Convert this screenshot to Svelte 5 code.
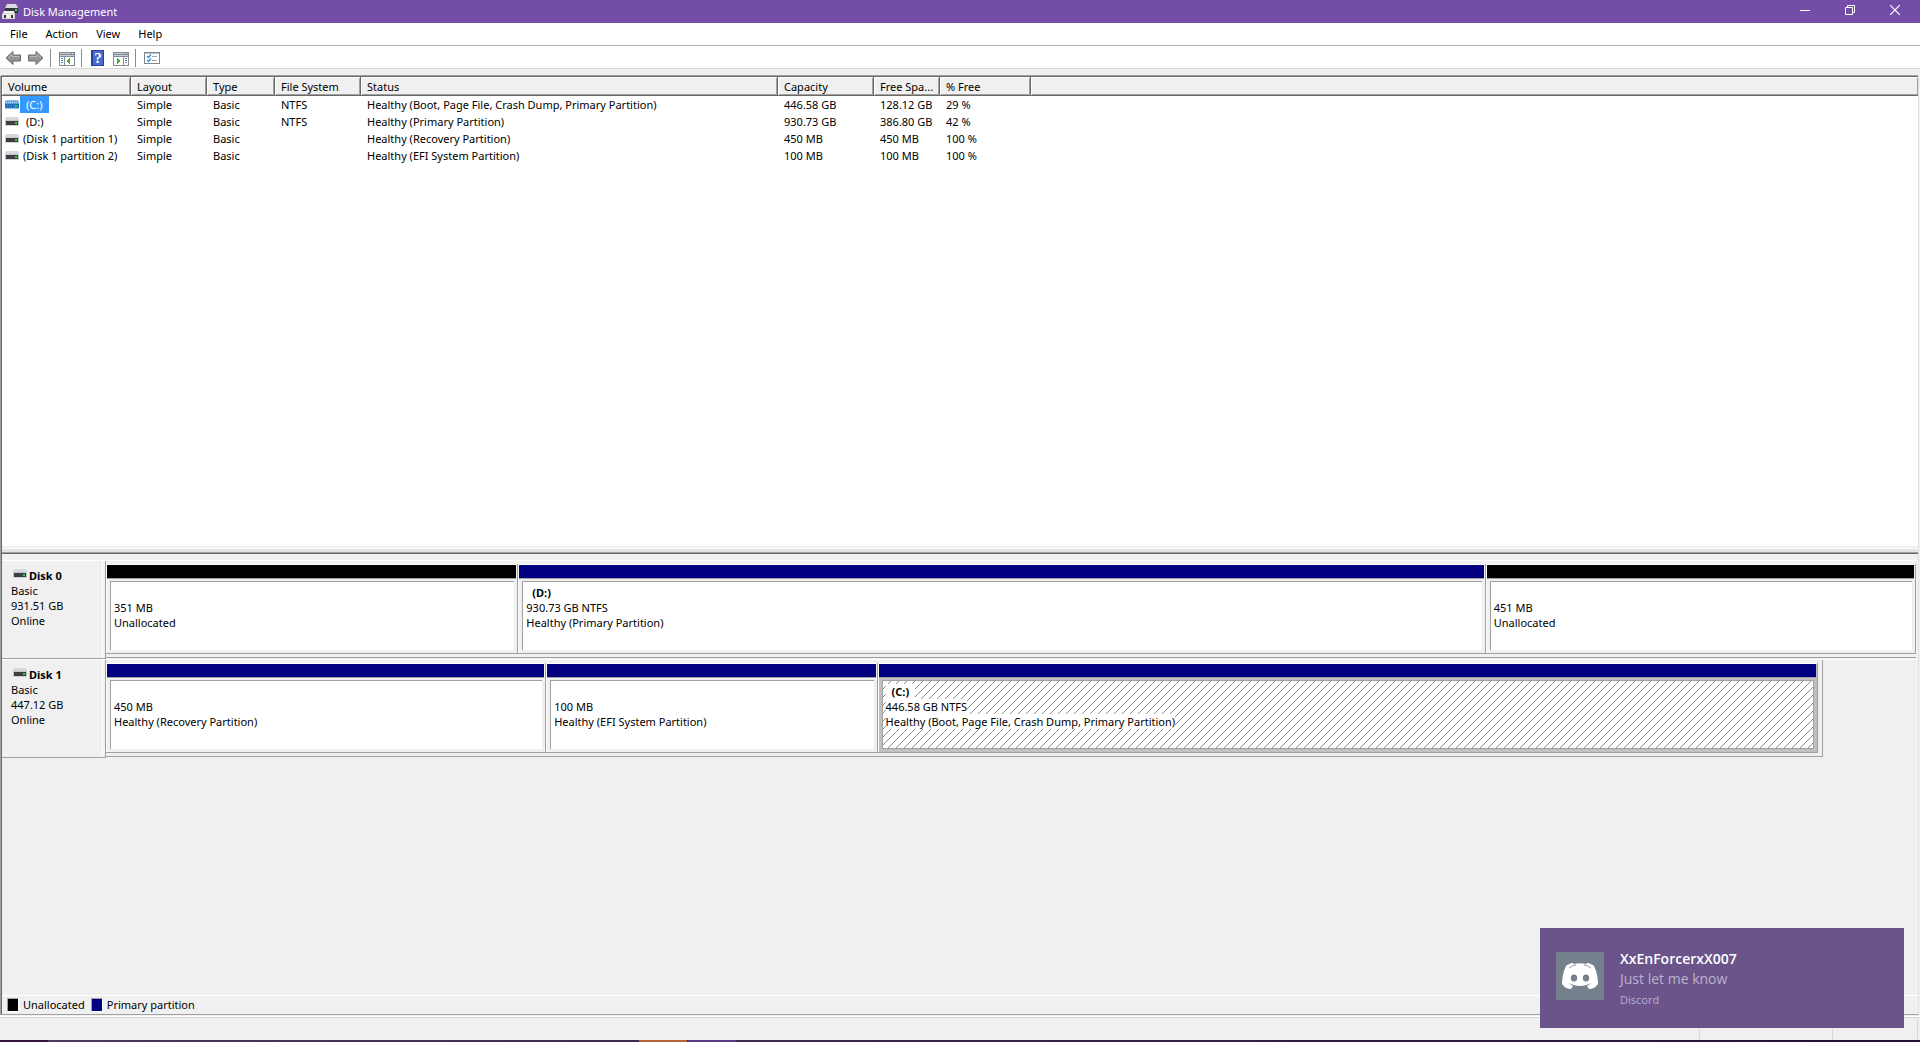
<script lang="ts">
  type Volume = {
    name: string;
    layout: string;
    type: string;
    fs: string;
    status: string;
    capacity: string;
    free: string;
    percent: string;
    letter?: boolean;
  };

  type Partition = {
    label: string;
    size: string;
    status: string;
    share: number;
    kind: 'unallocated' | 'primary';
    selected?: boolean;
  };

  const menus = ['File', 'Action', 'View', 'Help'];
  const columns = ['Volume', 'Layout', 'Type', 'File System', 'Status', 'Capacity', 'Free Spa...', '% Free'];

  const volumes: Volume[] = [
    { name: '(C:)', layout: 'Simple', type: 'Basic', fs: 'NTFS', status: 'Healthy (Boot, Page File, Crash Dump, Primary Partition)', capacity: '446.58 GB', free: '128.12 GB', percent: '29 %', letter: true },
    { name: '(D:)', layout: 'Simple', type: 'Basic', fs: 'NTFS', status: 'Healthy (Primary Partition)', capacity: '930.73 GB', free: '386.80 GB', percent: '42 %', letter: true },
    { name: '(Disk 1 partition 1)', layout: 'Simple', type: 'Basic', fs: '', status: 'Healthy (Recovery Partition)', capacity: '450 MB', free: '450 MB', percent: '100 %' },
    { name: '(Disk 1 partition 2)', layout: 'Simple', type: 'Basic', fs: '', status: 'Healthy (EFI System Partition)', capacity: '100 MB', free: '100 MB', percent: '100 %' }
  ];

  const disks: { name: string; size: string; width: number; parts: Partition[] }[] = [
    {
      name: 'Disk 0',
      size: '931.51 GB',
      width: 100,
      parts: [
        { label: '', size: '351 MB', status: 'Unallocated', share: 412, kind: 'unallocated' },
        { label: '(D:)', size: '930.73 GB NTFS', status: 'Healthy (Primary Partition)', share: 968, kind: 'primary' },
        { label: '', size: '451 MB', status: 'Unallocated', share: 430, kind: 'unallocated' }
      ]
    },
    {
      name: 'Disk 1',
      size: '447.12 GB',
      width: 94.85,
      parts: [
        { label: '', size: '450 MB', status: 'Healthy (Recovery Partition)', share: 440, kind: 'primary' },
        { label: '', size: '100 MB', status: 'Healthy (EFI System Partition)', share: 331, kind: 'primary' },
        { label: '(C:)', size: '446.58 GB NTFS', status: 'Healthy (Boot, Page File, Crash Dump, Primary Partition)', share: 941, kind: 'primary', selected: true }
      ]
    }
  ];

  let selected = $state(0);
</script>

{#snippet drive(active: boolean)}
  <svg class="drive" width="14" height="9" viewBox="0 0 14 9" shape-rendering="crispEdges" aria-hidden="true">
    <path d="M1 0H13V1H14V4H0V1H1Z" fill={active ? '#8fc0ee' : '#d6d8db'} />
    <rect y="3" width="14" height="1" fill={active ? '#6aaeea' : '#c3c6ca'} />
    <rect y="4" width="14" height="4" fill={active ? '#1c6db5' : '#c3c6ca'} />
    <rect x="1" y="4" width="12" height="4" fill={active ? '#1c6db5' : '#3c3f42'} />
    <rect y="8" width="14" height="1" fill={active ? '#8fc0ee' : '#d0d2d4'} />
    <rect x="10" y="5" width="2" height="2" fill="#35d03a" />
    {#if active}
      <path d="M0 1.500H14M0 3.500H14M0 5.500H9M0 7.500H14" stroke="#3399ff" stroke-dasharray="1 1" />
    {/if}
  </svg>
{/snippet}

<div class="window">
  <header class="titlebar">
    <svg width="17" height="16" viewBox="0 0 17 16" aria-hidden="true">
      <path d="M5 0H14L16 4V9H3V4Z" fill="#d9dcde" />
      <path d="M3 4H16V9H3Z" fill="#33373a" />
      <rect x="13" y="5" width="2" height="2" fill="#3be048" />
      <path d="M2 7H12L13 10V15H0V10Z" fill="#d6d7d3" />
      <path d="M2 7H12V9H2Z" fill="#f4f4f2" />
      <rect x="1" y="10" width="11" height="4" fill="#eeeeeb" />
      <rect x="2" y="11" width="2" height="3" fill="#333" />
      <rect x="9" y="11" width="2" height="3" fill="#333" />
    </svg>
    <h1>Disk Management</h1>
    <div class="caption">
      <button aria-label="Minimize">
        <svg width="10" height="10" viewBox="0 0 10 10"><path d="M0 5.500H10" stroke="#fff" /></svg>
      </button>
      <button aria-label="Restore">
        <svg width="10" height="10" viewBox="0 0 10 10" fill="none" stroke="#fff"><path d="M.5 2.500H7.500V9.500H.5ZM2.500 2.500V.5H9.500V7.500H7.500" /></svg>
      </button>
      <button aria-label="Close">
        <svg width="10" height="10" viewBox="0 0 10 10"><path d="M0 0L10 10M10 0L0 10" stroke="#fff" stroke-width="1.200" /></svg>
      </button>
    </div>
  </header>

  <nav class="menubar">
    {#each menus as menu}
      <button>{menu}</button>
    {/each}
  </nav>

  <div class="toolbar">
    <button aria-label="Back">
      <svg width="16" height="16" viewBox="0 0 16 16"><path d="M1 8L8 1.500V5H15.500V11H8V14.500Z" fill="#939393" stroke="#6c6c6c" /><path d="M3 8L7 4.500V6.500H14" fill="none" stroke="#b9b9b9" /></svg>
    </button>
    <button class="forward" aria-label="Forward">
      <svg width="16" height="16" viewBox="0 0 16 16"><path d="M15 8L8 1.500V5H.5V11H8V14.500Z" fill="#939393" stroke="#6c6c6c" /><path d="M2 6.500H9V4.500L13 8" fill="none" stroke="#b9b9b9" /></svg>
    </button>
    <span class="divider"></span>
    <button class="panes" aria-label="Show/Hide Console Tree">
      <svg width="16" height="14" viewBox="0 0 16 14" shape-rendering="crispEdges">
        <rect width="16" height="14" fill="#858b94" /><rect x="1" y="1" width="11" height="1" fill="#c3c8d0" /><path d="M13 1h1v1h-1z" fill="#fff" />
        <rect x="1" y="3" width="14" height="1" fill="#c9ced6" /><rect x="1" y="5" width="4" height="8" fill="#fff" /><rect x="6" y="5" width="9" height="8" fill="#fff" />
        <path d="M2 6h2v1H2zM2 8h2v1H2zM2 10h2v1H2z" fill="#5d86b8" /><path d="M11 6V12L7 9Z" fill="#3faf2c" />
      </svg>
    </button>
    <span class="divider"></span>
    <button class="help" aria-label="Help">
      <svg width="13" height="16" viewBox="0 0 13 16">
        <rect width="13" height="16" fill="#24419c" /><rect x="2" y="1" width="10" height="14" fill="#4a6cd0" />
        <text x="7" y="13" text-anchor="middle" font-family="Liberation Serif, serif" font-size="15" font-weight="700" fill="#fff">?</text>
      </svg>
    </button>
    <button class="panes actions" aria-label="Show/Hide Action Pane">
      <svg width="16" height="14" viewBox="0 0 16 14" shape-rendering="crispEdges">
        <rect width="16" height="14" fill="#858b94" /><rect x="1" y="1" width="11" height="1" fill="#c3c8d0" /><path d="M13 1h1v1h-1z" fill="#fff" />
        <rect x="1" y="3" width="14" height="1" fill="#c9ced6" /><rect x="1" y="5" width="9" height="8" fill="#fff" /><rect x="11" y="5" width="4" height="8" fill="#fff" />
        <path d="M12 6h2v1h-2zM12 8h2v1h-2zM12 10h2v1h-2z" fill="#5d86b8" /><path d="M4 6V12L8 9Z" fill="#3faf2c" />
      </svg>
    </button>
    <span class="divider"></span>
    <button aria-label="Settings">
      <svg width="16" height="12" viewBox="0 0 16 12">
        <rect x=".5" y=".5" width="15" height="11" fill="#fff" stroke="#80868d" />
        <path d="M0 1H16" stroke="#80868d" />
        <path d="M3 4L4.500 5.500L7 2.500M3 8L4.500 9.500L7 6.500" fill="none" stroke="#3489d0" stroke-width="1.200" />
        <path d="M8 4.500H13M8 8.500H13" stroke="#a0a5aa" />
      </svg>
    </button>
  </div>

  <main>
    <section class="volumes" aria-label="Volumes">
      <table>
        <colgroup>
          <col class="c-volume" /><col class="c-layout" /><col class="c-type" /><col class="c-fs" />
          <col class="c-status" /><col class="c-capacity" /><col class="c-free" /><col class="c-percent" /><col />
        </colgroup>
        <thead>
          <tr>
            {#each columns as column}
              <th>{column}</th>
            {/each}
            <th class="rest" aria-hidden="true"></th>
          </tr>
        </thead>
        <tbody>
          {#each volumes as volume, i}
            <tr onclick={() => (selected = i)}>
              <td class="name">
                {@render drive(selected === i)}<span class:letter={volume.letter} class:active={selected === i}>{volume.name}</span>
              </td>
              <td>{volume.layout}</td>
              <td>{volume.type}</td>
              <td>{volume.fs}</td>
              <td>{volume.status}</td>
              <td>{volume.capacity}</td>
              <td>{volume.free}</td>
              <td>{volume.percent}</td>
              <td></td>
            </tr>
          {/each}
        </tbody>
      </table>
    </section>

    <section class="graph" aria-label="Disks">
      {#each disks as disk}
        <div class="disk">
          <div class="disk-info">
            <div class="disk-name">{@render drive(false)}<b>{disk.name}</b></div>
            <div>Basic</div>
            <div>{disk.size}</div>
            <div>Online</div>
          </div>
          <div class="track">
            <div class="parts" style="width: {disk.width}%">
              {#each disk.parts as part}
                <div class="part" class:selected={part.selected} style="flex-grow: {part.share}">
                  <div class="stripe {part.kind}"></div>
                  <div class="body">
                    <div><b>{part.label}</b></div>
                    <div><span>{part.size}</span></div>
                    <div><span>{part.status}</span></div>
                  </div>
                </div>
              {/each}
            </div>
          </div>
        </div>
      {/each}
      <div class="legend">
        <i class="unallocated"></i><span>Unallocated</span>
        <i class="primary"></i><span>Primary partition</span>
      </div>
    </section>
  </main>

  <footer class="statusbar"><span></span><span></span><span></span></footer>
  <div class="taskbar"><i class="first"></i><i class="orange"></i><i class="violet"></i></div>

  <aside class="toast">
    <div class="avatar">
      <svg width="36" height="27" viewBox="0 0 36 27" aria-hidden="true">
        <path d="M12 1L11 0C8 0 5 2 4 3C1 9 0 15 0 21C2 24 5 26 9 26L11 23C9 22 8 21 7 20C14 24 22 24 29 20C28 21 27 22 25 23L27 26C31 26 34 24 36 21C36 15 35 9 32 3C31 2 28 0 25 0L24 1C20 0 16 0 12 1Z" fill="#fff" />
        <path d="M7 5C10 3 12 2 14 2M29 5C26 3 24 2 22 2" fill="none" stroke="#74808c" stroke-width=".8" />
        <ellipse cx="12" cy="15" rx="3.200" ry="3.600" fill="#74808c" /><ellipse cx="24" cy="15" rx="3.200" ry="3.600" fill="#74808c" />
      </svg>
    </div>
    <div class="message">
      <strong>XxEnForcerxX007</strong>
      <p>Just let me know</p>
      <small>Discord</small>
    </div>
  </aside>
</div>

<style>
  :global(body) {
    margin: 0;
  }

  .window {
    display: flex;
    flex-direction: column;
    min-height: 100vh;
    background: #f0f0f0;
    color: #000;
    font: 11px/15px 'Noto Sans', 'Open Sans', sans-serif;
  }

  button {
    display: flex;
    align-items: center;
    justify-content: center;
    padding: 0;
    border: 0;
    background: none;
    color: inherit;
    font: inherit;
  }

  svg {
    display: block;
    flex: none;
  }

  .titlebar {
    display: flex;
    align-items: center;
    gap: 4px;
    height: 23px;
    padding-left: 2px;
    background: #744da9;
    color: #fff;
  }

  h1 {
    flex: 1;
    margin: 0;
    font-size: 11px;
    font-weight: 400;
  }

  .caption {
    display: flex;
    margin-bottom: 3px;
  }

  .caption button {
    width: 45px;
    height: 20px;
  }

  .caption button:last-child {
    margin-right: 3px;
  }

  .menubar {
    display: flex;
    gap: 18px;
    height: 20px;
    padding: 0 10px 2px;
    background: #fff;
    border-bottom: 1px solid #b0b0b6;
  }

  .toolbar {
    display: flex;
    align-items: center;
    height: 21px;
    padding: 1px 5px 0;
    background: #fff;
    border-bottom: 1px solid #d9d9d9;
  }

  .forward {
    margin-left: 7px;
  }

  .help {
    margin-left: 1px;
  }

  .actions {
    margin-left: 9px;
  }

  .panes {
    padding-top: 2px;
  }

  .divider {
    width: 1px;
    height: 18px;
    margin: 0 8px 0 6px;
    background: #8d8d8d;
  }

  main {
    display: flex;
    flex: 1;
    flex-direction: column;
    margin: 7px 1px 0 0;
    border-left: 1px solid #a0a0a0;
    border-right: 1px solid #e3e3e3;
    border-bottom: 1px solid #a0a0a0;
  }

  .volumes {
    flex: 512 1 0;
    border: solid #696969;
    border-width: 1px 0 1px 1px;
    background: #fff;
    box-shadow: inset 0 -1px #a0a0a0, inset 0 -4px #e3e3e3, inset 0 -5px #fff, inset 0 -7px #f0f0f0, 0 -1px #a0a0a0;
  }

  table {
    width: 100%;
    table-layout: fixed;
    border-collapse: separate;
    border-spacing: 0;
  }

  .c-volume { width: 129px; }
  .c-layout { width: 76px; }
  .c-type { width: 68px; }
  .c-fs { width: 86px; }
  .c-status { width: 417px; }
  .c-capacity { width: 96px; }
  .c-free { width: 66px; }
  .c-percent { width: 91px; }

  th,
  td {
    padding: 0 0 0 6px;
    text-align: left;
    font-weight: 400;
    white-space: nowrap;
  }

  th {
    height: 19px;
    padding-top: 1px;
    line-height: 16px;
    box-sizing: border-box;
    background: #f0f0f0;
    border-right: 1px solid #696969;
    border-bottom: 1px solid #696969;
    box-shadow: inset 1px 1px #fff, inset -1px -1px #a0a0a0;
  }

  th.rest {
    border-right: 0;
  }

  td {
    height: 17px;
    line-height: 17px;
  }

  .name {
    display: flex;
    align-items: center;
    padding-left: 3px;
  }

  .name span {
    margin-left: 1px;
    padding: 0 3px;
  }

  .name .letter {
    padding: 0 6px;
  }

  .name .active {
    background: #3399ff;
    color: #fff;
  }

  .graph {
    display: flex;
    flex: 488 1 0;
    flex-direction: column;
    padding-top: 6px;
    border-left: 1px solid #696969;
  }

  .disk {
    display: flex;
    height: 99px;
    border-top: 1px solid #fff;
    box-sizing: border-box;
  }

  .disk-info {
    width: 94px;
    padding: 7px 0 0 9px;
    border-right: 1px solid #a0a0a0;
    border-bottom: 1px solid #a0a0a0;
    box-shadow: inset -2px 0 #f0f0f0, inset -3px 0 #fff;
  }

  .disk-name {
    display: flex;
    gap: 2px;
    padding-left: 2px;
  }

  .disk-name .drive {
    margin-top: 1px;
  }

  .track {
    flex: 1;
    padding-right: 2px;
  }

  .parts {
    display: flex;
    height: 97px;
    box-sizing: border-box;
    padding: 3px 0;
    border-bottom: 1px solid #a0a0a0;
    box-shadow: inset 0 1px #f0f0f0;
  }

  .disk:nth-child(2) .parts {
    padding-right: 4px;
    border-right: 1px solid #a0a0a0;
  }

  .part {
    display: flex;
    flex: 1 1 0;
    flex-direction: column;
    box-sizing: border-box;
    min-width: 0;
    border: solid #a0a0a0;
    border-width: 0 1px 1px 0;
    box-shadow: inset 1px 1px #fff;
  }

  .stripe {
    height: 13px;
    margin: 1px 1px 0 1px;
    border-bottom: 1px solid #a0a0a0;
  }

  .unallocated {
    background: #000;
  }

  .primary {
    background: #000080;
  }

  .body {
    flex: 1;
    margin: 2px 3px 3px 4px;
    padding: 3px 3px 0;
    background: #fff;
    border: solid #a0a0a0;
    border-width: 1px 0 0 1px;
  }

  .body div {
    height: 15px;
    white-space: nowrap;
  }

  .body b {
    padding: 0 6px;
  }

  .selected {
    background: #c0c0c0;
  }

  .selected .body {
    background: linear-gradient(135deg, #fff 46%, #909090 46% 54%, #fff 54%) 0 0 / 8px 8px;
    border-width: 1px;
  }

  .selected .body b,
  .selected .body span {
    background: #fff;
  }

  .legend {
    display: flex;
    align-items: center;
    height: 19px;
    box-sizing: border-box;
    margin-top: auto;
    padding: 0 0 1px 5px;
    border-top: 1px solid #fff;
  }

  .legend i {
    width: 10px;
    height: 12px;
    margin-right: 5px;
    border: solid #a0a0a0;
    border-width: 1px 0 0 1px;
    box-shadow: 1px 1px #fff;
  }

  .legend span {
    margin-right: 6px;
  }

  .statusbar {
    display: flex;
    justify-content: flex-end;
    height: 23px;
    margin-top: 1px;
    border-top: 1px solid #fff;
    box-shadow: inset 0 1px #d7d7d7;
  }

  .statusbar span {
    width: 132px;
    margin: 2px 0 1px;
    border-right: 1px solid #d7d7d7;
  }

  .statusbar span:last-child {
    width: 84px;
    margin-right: 2px;
  }

  .taskbar {
    display: flex;
    height: 2px;
    background: linear-gradient(90deg, #4a3a5c, #21103a);
  }

  .taskbar i {
    width: 48px;
  }

  .taskbar .first {
    margin-right: 591px;
    background: #32123c;
  }

  .taskbar .orange {
    margin-right: 1px;
    background: #b8623a;
  }

  .taskbar .violet {
    background: #5b3f88;
  }

  .toast {
    position: fixed;
    right: 16px;
    bottom: 14px;
    display: flex;
    gap: 16px;
    width: 364px;
    height: 100px;
    box-sizing: border-box;
    padding: 24px 16px 0;
    background: #6a548a;
    color: #fff;
    font-family: 'Open Sans', 'Noto Sans', sans-serif;
  }

  .avatar {
    display: flex;
    align-items: center;
    justify-content: center;
    width: 48px;
    height: 48px;
    background: #74808c;
  }

  .message {
    margin-top: -3px;
  }

  strong,
  p,
  small {
    display: block;
    margin: 0;
    font-size: 14px;
    line-height: 20px;
  }

  strong {
    font-weight: 600;
  }

  p,
  small {
    color: #bdb1cd;
  }

  small {
    margin-top: 1px;
    font-size: 11px;
  }
</style>
